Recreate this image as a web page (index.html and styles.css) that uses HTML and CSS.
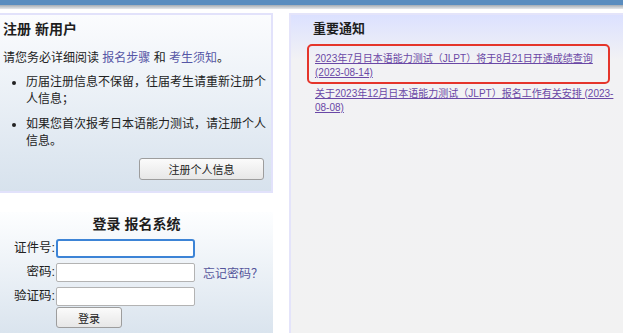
FILE: index.html
```html
<!DOCTYPE html>
<html lang="zh-CN">
<head>
<meta charset="utf-8">
<title>JLPT 报名</title>
<link rel="stylesheet" href="styles.css">
</head>
<body>
<div class="topbar"></div>
<div class="main">
  <div class="leftcol">
    <section class="panel register">
      <h2 class="title">注册 新用户</h2>
      <p class="intro">请您务必详细阅读 <a class="blue" href="#">报名步骤</a> 和 <a class="blue" href="#">考生须知</a>。</p>
      <ul class="tips">
        <li>历届注册信息不保留，往届考生请重新注册个人信息；</li>
        <li>如果您首次报考日本语能力测试，请注册个人信息。</li>
      </ul>
      <div class="btnrow"><button class="btn reg" type="button">注册个人信息</button></div>
    </section>
    <section class="panel login">
      <h2 class="title center">登录 报名系统</h2>
      <form class="form">
        <label class="lbl">证件号:</label><input class="inp focus" type="text"><span></span>
        <label class="lbl">密码:</label><input class="inp" type="password"><a class="forgot" href="#">忘记密码？</a>
        <label class="lbl">验证码:</label><input class="inp" type="text"><span></span>
        <span></span><button class="btn submit" type="button">登录</button><span></span>
      </form>
    </section>
  </div>
  <section class="notice">
    <h2 class="title ntitle">重要通知</h2>
    <ul class="news">
      <li class="hl"><a href="#">2023年7月日本语能力测试（JLPT）将于8月21日开通成绩查询(2023-08-14)</a></li>
      <li class="item"><a href="#">关于2023年12月日本语能力测试（JLPT）报名工作有关安排 (2023-08-08)</a></li>
    </ul>
  </section>
</div>
</body>
</html>
```

FILE: styles.css
```css
html, body {
  margin: 0;
  padding: 0;
}
body {
  width: 623px;
  height: 333px;
  overflow: hidden;
  background: #fff;
  color: #222;
  font-family: "Liberation Sans", "Noto Sans CJK SC", sans-serif;
}
.topbar {
  height: 9px;
  background: linear-gradient(#5a8dbf 0, #5a8dbf 5px, #a3abb3 5px, #e6e8ea 9px);
}
.main {
  display: flex;
  align-items: flex-start;
  margin-top: 4px;
}
.leftcol {
  width: 273px;
  flex: none;
  display: flex;
  flex-direction: column;
  gap: 19px;
}
.panel {
  box-sizing: border-box;
}
.title {
  margin: 0;
  font-size: 14px;
  line-height: 20px;
  font-weight: bold;
  color: #1e1e1e;
}
.center {
  text-align: center;
}
.register {
  height: 180px;
  padding: 4px 2px 0 3px;
  border: 2px solid #e2e2fb;
  border-left: none;
  background: linear-gradient(#fbfcfe, #d7e2ed);
}
.intro {
  margin: 11px 0 0;
  font-size: 12px;
  line-height: 17px;
}
.blue {
  color: #5656a6;
  text-decoration: none;
}
.tips {
  margin: 7px 0 0;
  padding-left: 23px;
  font-size: 12px;
  line-height: 17px;
}
.tips li {
  margin-bottom: 8px;
}
.btnrow {
  display: flex;
  justify-content: flex-end;
  margin-top: 3px;
  padding-right: 5px;
}
.btn {
  box-sizing: border-box;
  border: 1px solid #9d9d9d;
  border-radius: 3px;
  background: linear-gradient(#fbfbfb, #e7e7e7);
  color: #222;
  font-family: "Liberation Sans", "Noto Sans CJK SC", sans-serif;
  font-size: 11px;
  padding: 0;
}
.reg {
  width: 125px;
  height: 22px;
}
.login {
  height: 130px;
  padding-top: 2px;
  background: linear-gradient(#fdfeff, #dae4ee 121px);
}
.form {
  display: grid;
  grid-template-columns: 56px 139px auto;
  row-gap: 5px;
  align-items: center;
  margin-top: 5px;
}
.lbl {
  text-align: right;
  font-size: 12.5px;
  line-height: 19px;
  padding-right: 1px;
}
.inp {
  box-sizing: border-box;
  width: 139px;
  height: 19px;
  margin: 0;
  border: 1px solid #b3b3b3;
  border-radius: 2px;
  background: #fff;
  outline: none;
}
.inp.focus {
  border: 2px solid #3d84d6;
  border-radius: 3px;
}
.forgot {
  margin-left: 8px;
  font-size: 12px;
  color: #55559b;
  text-decoration: none;
  white-space: nowrap;
}
.submit {
  width: 66px;
  height: 21px;
  margin-top: -4px;
}
.notice {
  flex: none;
  box-sizing: border-box;
  width: 336px;
  height: 330px;
  margin-left: 16px;
  padding: 4px 0 0 0;
  border-left: 2px solid #e4e4fa;
  border-top: 2px solid #e4e4fa;
  background: linear-gradient(#dce1ff 0, #f2f2f4 45px, #f2f2f2 100%);
}
.ntitle {
  font-size: 13px;
  padding-left: 22px;
}
.news {
  list-style: none;
  margin: 5px 0 0;
  padding-left: 16px;
  font-size: 10px;
  line-height: 14px;
}
.news a {
  color: #6a48a6;
  text-decoration: underline;
}
.hl {
  box-sizing: border-box;
  width: 303px;
  padding: 6px 4px 2px 6px;
  border: 2px solid #e5352b;
  border-radius: 5px;
}
.item {
  margin-top: 3px;
  padding-left: 8px;
}
```
